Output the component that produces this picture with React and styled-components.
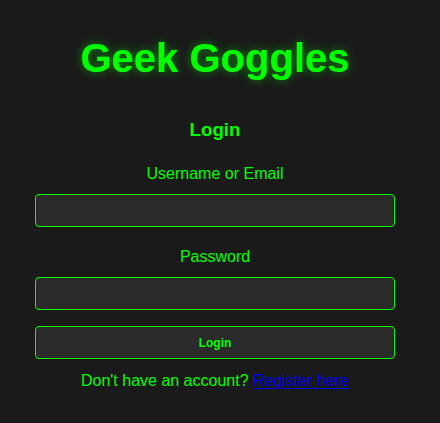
import styled, { createGlobalStyle } from 'styled-components';

const GlobalStyle = createGlobalStyle`
  body {
    margin: 0;
    background-color: #1a1a1a;
    font-family: "Liberation Sans", Arial, sans-serif;
    color: #00ff00;
  }
`;

const Page = styled.main`
  padding: 36px 10px 0 0;
  text-align: center;
`;

const Title = styled.h1`
  margin: 0 0 38px;
  font-size: 40px;
  font-weight: bold;
  color: #00ff00;
  text-shadow: 0 0 10px rgba(0, 255, 0, 0.5);
`;

const Form = styled.form`
  width: 360px;
  margin: 0 auto;
  display: flex;
  flex-direction: column;
`;

const Heading = styled.h3`
  margin: 0 0 24px;
  font-size: 18.72px;
  line-height: 22px;
  font-weight: bold;
`;

const Field = styled.div`
  display: flex;
  flex-direction: column;
  margin-bottom: ${(p) => p.$spacing || 21}px;
`;

const Label = styled.label`
  font-size: 16px;
  line-height: 18px;
  margin-bottom: 11px;
`;

const Input = styled.input`
  box-sizing: border-box;
  width: 100%;
  height: 33px;
  padding: 6px 8px;
  border: 1px solid #00ff00;
  border-radius: 4px;
  background-color: #2a2a2a;
  color: #00ff00;
  font-family: inherit;
  outline: none;
`;

const Button = styled.button`
  box-sizing: border-box;
  width: 100%;
  height: 33px;
  border: 1px solid #00ff00;
  border-radius: 4px;
  background-color: #2a2a2a;
  color: #00ff00;
  font-family: "Liberation Sans", Arial, sans-serif;
  font-size: 12px;
  font-weight: bold;
  cursor: pointer;
`;

const Footer = styled.p`
  margin: 13px 0 0;
  font-size: 16px;
  line-height: 18px;

  a {
    color: #0000ee;
    text-decoration: underline;
    text-decoration-thickness: 1px;
    text-underline-offset: 2px;
  }
`;

export default function App() {
  return (
    <>
      <GlobalStyle />
      <Page>
        <Title>Geek Goggles</Title>
        <Form onSubmit={(e) => e.preventDefault()}>
          <Heading>Login</Heading>
          <Field>
            <Label htmlFor="user">Username or Email</Label>
            <Input id="user" type="text" />
          </Field>
          <Field $spacing={16}>
            <Label htmlFor="pass">Password</Label>
            <Input id="pass" type="password" />
          </Field>
          <Button type="submit">Login</Button>
          <Footer>
            Don't have an account? <a href="#register">Register here</a>
          </Footer>
        </Form>
      </Page>
    </>
  );
}
